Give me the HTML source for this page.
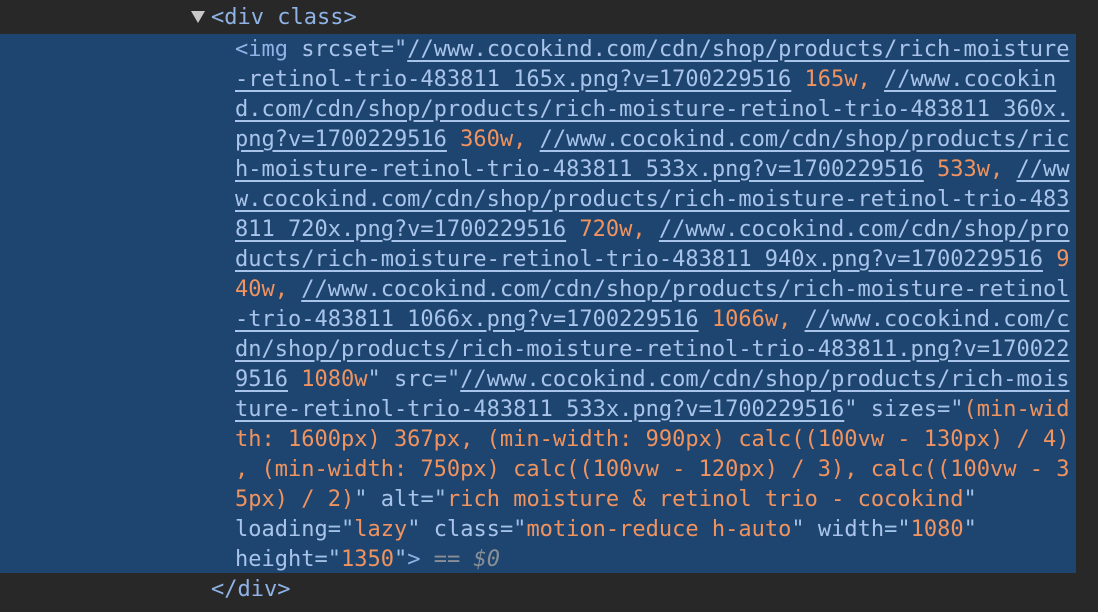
<!DOCTYPE html>
<html><head><meta charset="utf-8"><style>
html,body{margin:0;background:#282828;width:1098px;height:612px;overflow:hidden}
body{font-family:"DejaVu Sans Mono","Liberation Mono",monospace;font-size:22px;color:#a1c1e6}
.l{position:absolute;left:235px;height:30px;line-height:30px;white-space:pre}
.hl{position:absolute;left:0;top:34px;width:1076px;height:539px;background:#1e4570}
.t{color:#8fb3e6}
.a{color:#a8c4ea}
.v{color:#f0935f}
.u{color:#a8c4ea;text-decoration:underline;text-underline-offset:4px}
.g{color:#8a8f96}
.tri{position:absolute;left:191px;top:11px;width:0;height:0;border-left:7px solid transparent;border-right:7px solid transparent;border-top:12px solid #c8c8c8}
</style></head><body>
<div class="hl"></div>
<div class="tri"></div>
<div class="l t" style="left:211px;top:3px">&lt;div class&gt;</div>
<div class="l" style="top:35px"><span class="t">&lt;img</span> <span class="a">srcset</span>="<span class="u">//www.cocokind.com/cdn/shop/products/rich-moisture</span></div>
<div class="l" style="top:65px"><span class="u">-retinol-trio-483811_165x.png?v=1700229516</span> <span class="v">165w,</span> <span class="u">//www.cocokin</span></div>
<div class="l" style="top:95px"><span class="u">d.com/cdn/shop/products/rich-moisture-retinol-trio-483811_360x.</span></div>
<div class="l" style="top:125px"><span class="u">png?v=1700229516</span> <span class="v">360w,</span> <span class="u">//www.cocokind.com/cdn/shop/products/ric</span></div>
<div class="l" style="top:155px"><span class="u">h-moisture-retinol-trio-483811_533x.png?v=1700229516</span> <span class="v">533w,</span> <span class="u">//ww</span></div>
<div class="l" style="top:185px"><span class="u">w.cocokind.com/cdn/shop/products/rich-moisture-retinol-trio-483</span></div>
<div class="l" style="top:215px"><span class="u">811_720x.png?v=1700229516</span> <span class="v">720w,</span> <span class="u">//www.cocokind.com/cdn/shop/pro</span></div>
<div class="l" style="top:245px"><span class="u">ducts/rich-moisture-retinol-trio-483811_940x.png?v=1700229516</span> <span class="v">9</span></div>
<div class="l" style="top:275px"><span class="v">40w,</span> <span class="u">//www.cocokind.com/cdn/shop/products/rich-moisture-retinol</span></div>
<div class="l" style="top:305px"><span class="u">-trio-483811_1066x.png?v=1700229516</span> <span class="v">1066w,</span> <span class="u">//www.cocokind.com/c</span></div>
<div class="l" style="top:335px"><span class="u">dn/shop/products/rich-moisture-retinol-trio-483811.png?v=170022</span></div>
<div class="l" style="top:365px"><span class="u">9516</span> <span class="v">1080w</span>" <span class="a">src</span>="<span class="u">//www.cocokind.com/cdn/shop/products/rich-mois</span></div>
<div class="l" style="top:395px"><span class="u">ture-retinol-trio-483811_533x.png?v=1700229516</span>" <span class="a">sizes</span>="<span class="v">(min-wid</span></div>
<div class="l" style="top:425px"><span class="v">th: 1600px) 367px, (min-width: 990px) calc((100vw - 130px) / 4)</span></div>
<div class="l" style="top:455px"><span class="v">, (min-width: 750px) calc((100vw - 120px) / 3), calc((100vw - 3</span></div>
<div class="l" style="top:485px"><span class="v">5px) / 2)</span>" <span class="a">alt</span>="<span class="v">rich moisture &amp; retinol trio - cocokind</span>"</div>
<div class="l" style="top:515px"><span class="a">loading</span>="<span class="v">lazy</span>" <span class="a">class</span>="<span class="v">motion-reduce h-auto</span>" <span class="a">width</span>="<span class="v">1080</span>"</div>
<div class="l" style="top:545px"><span class="a">height</span>="<span class="v">1350</span>"<span class="t">&gt;</span> <span class="g">== <i>$0</i></span></div>
<div class="l t" style="left:211px;top:575px">&lt;/div&gt;</div>
</body></html>
